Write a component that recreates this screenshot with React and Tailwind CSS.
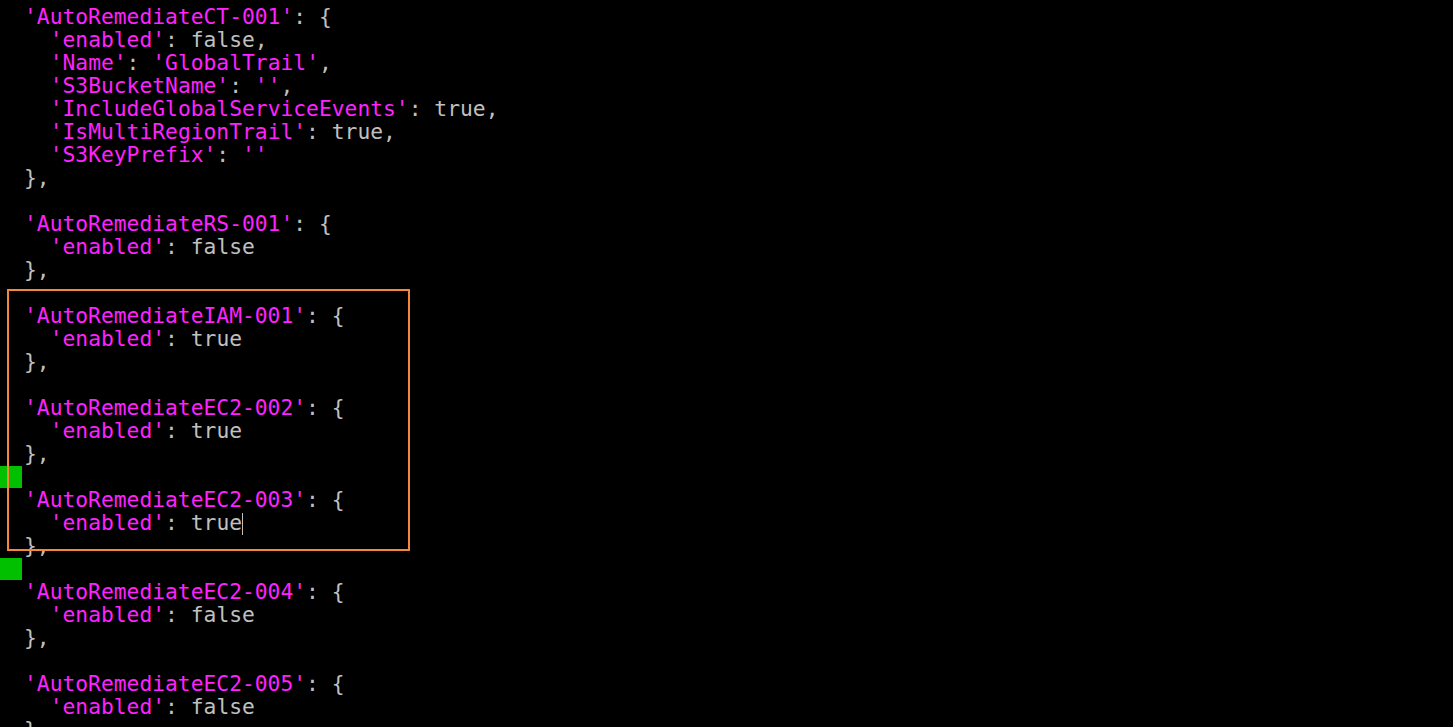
import React from 'react';

const blocks = [
  {
    name: 'AutoRemediateCT-001',
    fields: [
      ['enabled', 'false'],
      ['Name', "'GlobalTrail'", true],
      ['S3BucketName', "''", true],
      ['IncludeGlobalServiceEvents', 'true'],
      ['IsMultiRegionTrail', 'true'],
      ['S3KeyPrefix', "''", true],
    ],
  },
  { name: 'AutoRemediateRS-001', fields: [['enabled', 'false']] },
  { name: 'AutoRemediateIAM-001', fields: [['enabled', 'true']] },
  { name: 'AutoRemediateEC2-002', fields: [['enabled', 'true']] },
  { name: 'AutoRemediateEC2-003', fields: [['enabled', 'true']], cursor: true },
  { name: 'AutoRemediateEC2-004', fields: [['enabled', 'false']] },
  { name: 'AutoRemediateEC2-005', fields: [['enabled', 'false']] },
];

const Key = ({ children }) => <span className="text-[#ff22ff]">'{children}'</span>;

const Row = ({ marker, children }) => (
  <div className="flex h-[23px] items-center">
    <div className="w-[24px] shrink-0">
      {marker && <div className="h-[22px] w-[22px] bg-[#00c000]" />}
    </div>
    <div className="whitespace-pre">{children}</div>
  </div>
);

const App = () => {
  const rows = [];
  blocks.forEach((b, bi) => {
    rows.push(
      <Row key={`h${bi}`}>
        <Key>{b.name}</Key>: {'{'}
      </Row>
    );
    b.fields.forEach(([k, v, isStr], fi) => {
      const last = fi === b.fields.length - 1;
      rows.push(
        <Row key={`f${bi}-${fi}`}>
          {'  '}
          <Key>{k}</Key>: {isStr ? <span className="text-[#ff22ff]">{v}</span> : v}
          {!last && ','}
          {b.cursor && last && <span className="inline-block h-[22px] w-px bg-[#c0c0c0] align-middle" />}
        </Row>
      );
    });
    rows.push(<Row key={`c${bi}`}>{bi === blocks.length - 1 ? '}' : '},'}</Row>);
    if (bi < blocks.length - 1) {
      rows.push(<Row key={`b${bi}`} marker={bi === 3 || bi === 4} />);
    }
  });

  return (
    <div className="relative h-[727px] w-[1453px] overflow-hidden bg-black pt-[5px] text-[21.3px] text-[#c0c0c0] [font-family:'DejaVu_Sans_Mono',monospace]">
      {rows}
      <div className="pointer-events-none absolute left-[7px] top-[289px] h-[262px] w-[403px] border-2 border-[#f5873a]" />
    </div>
  );
};

export default App;
